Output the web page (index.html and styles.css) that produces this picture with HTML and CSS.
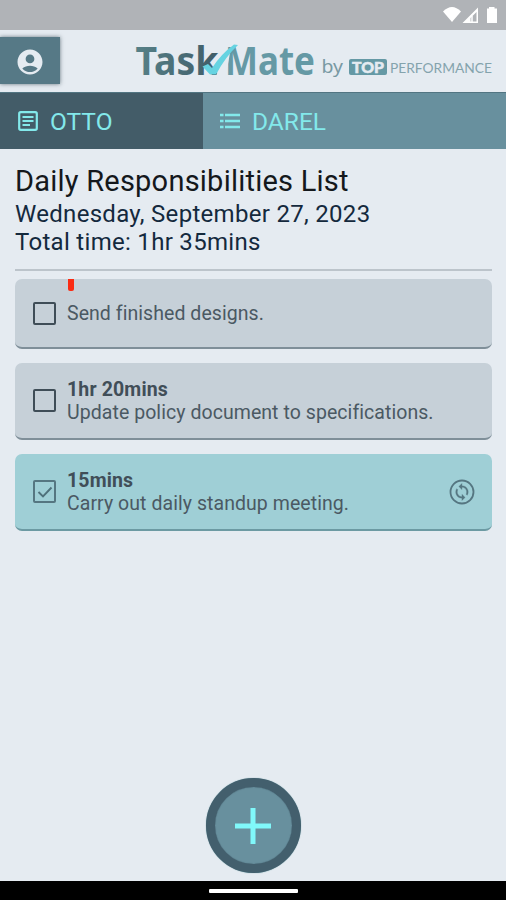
FILE: index.html
```html
<!DOCTYPE html>
<html lang="en">
<head>
<meta charset="utf-8">
<title>TaskMate</title>
<link rel="stylesheet" href="styles.css">
</head>
<body>
<div class="app">
  <div class="status">
    <svg width="60" height="20" viewBox="0 0 60 20" fill="#fff">
      <path d="M0 4.500 Q9 -4.500 18 4.500 L9 15Z"/>
      <path fill-rule="evenodd" d="M19.500 16 L35 0.500 V16Z M33.500 5 L27.500 11 V14.500 H33.500Z"/>
      <path d="M29 9 V15" stroke="#fff" stroke-width="1.500"/>
      <path d="M46 0 H51.500 V1.500 H54 V16 H44 V1.500 H46Z"/>
    </svg>
  </div>
  <header class="header">
    <button class="account" aria-label="Account">
      <svg width="30" height="30" viewBox="0 0 24 24"><path fill="#e5ebf1" d="M12 2C6.480 2 2 6.480 2 12s4.480 10 10 10 10-4.480 10-10S17.520 2 12 2zm0 4c1.930 0 3.500 1.570 3.500 3.500S13.930 13 12 13s-3.500-1.570-3.500-3.500S10.070 6 12 6zm0 14c-2.030 0-4.430-.820-6.140-2.880C7.550 15.800 9.680 15 12 15s4.450.800 6.140 2.120C16.430 19.180 14.030 20 12 20z"/></svg>
    </button>
    <svg class="logo" width="366" height="46" viewBox="130 38 366 46">
      <defs>
        <linearGradient id="dark" x1="0" y1="0" x2="1" y2="0"><stop offset="0" stop-color="#568087"/><stop offset="1" stop-color="#405c68"/></linearGradient>
      </defs>
      <text class="brand" x="135.500" y="74.500" textLength="83" lengthAdjust="spacingAndGlyphs" fill="url(#dark)">Task</text>
      <text class="brand" x="225" y="74.500" textLength="90" lengthAdjust="spacingAndGlyphs" fill="#6599a5">Mate</text>
      <path d="M216 75.500 L221 66 L231 47 L226 75.500Z" fill="#e5ebf1"/>
      <path d="M202.500 66.500 L208 64 L212 68 Q221 54 234 44.500 L238 45 Q226 56 216 74.500 H210Z" fill="#66d3e1"/>
      <text class="by" x="321.500" y="73" textLength="21.500" lengthAdjust="spacingAndGlyphs">by</text>
      <rect x="349" y="59" width="38" height="16" rx="2" fill="#6599a5"/>
      <text class="top" x="352" y="72.500" textLength="32" lengthAdjust="spacingAndGlyphs">TOP</text>
      <text class="perf" x="390" y="73" textLength="102" lengthAdjust="spacingAndGlyphs">PERFORMANCE</text>
    </svg>
  </header>
  <nav class="tabs">
    <a class="tab active">
      <svg width="20" height="20" viewBox="0 0 20 20" fill="none" stroke="#83e9eb"><rect x="1.200" y="1.200" width="17.600" height="17.600" rx="1.500" stroke-width="2.200"/><path stroke-width="2" d="M4.500 6H15.500M4.500 10H15.500M4.500 14H12"/></svg>
      <span>OTTO</span>
    </a>
    <a class="tab">
      <svg width="20" height="20" viewBox="0 0 20 20" stroke="#83e9eb" stroke-width="2.600"><path d="M0 4H3.500M5 4H20M0 10H3.500M5 10H20M0 16H3.500M5 16H20"/></svg>
      <span>DAREL</span>
    </a>
  </nav>
  <main class="main">
    <h1>Daily Responsibilities List</h1>
    <p class="sub">Wednesday, September 27, 2023</p>
    <p class="sub">Total time: 1hr 35mins</p>
    <div class="list">
      <div class="card first">
        <i class="marker"></i>
        <span class="box"></span>
        <div class="body"><p>Send finished designs.</p></div>
      </div>
      <div class="card">
        <span class="box"></span>
        <div class="body"><b>1hr 20mins</b><p>Update policy document to specifications.</p></div>
      </div>
      <div class="card done">
        <span class="box"><svg width="18" height="18" viewBox="0 0 18 18"><path d="M2.500 9 L7 13.500 L15.500 4.500" fill="none" stroke="#4f717b" stroke-width="1.900"/></svg></span>
        <div class="body"><b>15mins</b><p>Carry out daily standup meeting.</p></div>
        <svg class="repeat" width="26" height="26" viewBox="0 0 26 26"><circle cx="13" cy="13" r="11.500" fill="none" stroke="#557681" stroke-width="1.800"/><g transform="translate(3.600 3.600) scale(.78)"><path fill="#557681" stroke="#557681" stroke-width=".4" d="M12 4V1L8 5l4 4V6c3.310 0 6 2.690 6 6 0 1.010-.250 1.970-.700 2.800l1.460 1.460C19.540 15.030 20 13.570 20 12c0-4.420-3.580-8-8-8zm0 14c-3.310 0-6-2.690-6-6 0-1.010.250-1.970.700-2.800L5.240 7.740C4.460 8.970 4 10.430 4 12c0 4.420 3.580 8 8 8v3l4-4-4-4v3z"/></g></svg>
      </div>
    </div>
  </main>
  <div class="dock">
    <button class="fab" aria-label="Add task"><svg width="38" height="38" viewBox="0 0 38 38"><path d="M19 1V37M1 19H37" stroke="#80f8fa" stroke-width="5"/></svg></button>
  </div>
  <div class="navbar"><span></span></div>
</div>
</body>
</html>
```
FILE: styles.css
```css
* { box-sizing: border-box; }
body, h1, p { margin: 0; }
body { font-family: Roboto, sans-serif; background: #e5ebf1; }
button { border: 0; padding: 0; }
svg { display: block; flex: none; }
.app { width: 506px; height: 900px; display: flex; flex-direction: column; overflow: hidden; }
.status { height: 30px; background: #b0b3b7; display: flex; justify-content: flex-end; padding: 7px 3px 0 0; }
.header { height: 62px; display: flex; align-items: flex-start; justify-content: space-between; padding: 7px 10px 0 0; }
.account { width: 60px; height: 47px; background: #567986; display: flex; align-items: center; justify-content: center; box-shadow: 0 0 4px rgba(50, 70, 80, .7); }
.account svg { position: relative; top: 1px; }
.logo { margin-top: 1px; overflow: visible; }
.brand { font: 700 38.500px "Noto Sans", sans-serif; }
.by { font: 400 18px "Noto Sans", sans-serif; fill: #7899a3; }
.top { font: 900 15px Lato, sans-serif; fill: #e5ebf1; stroke: #e5ebf1; stroke-width: .5; }
.perf { font: 400 13.500px Lato, sans-serif; fill: #84a3ad; }
.tabs { height: 57px; display: flex; background: #68909e; border-top: 1px solid #527582; }
.tab { width: 202px; flex: none; display: flex; align-items: center; gap: 12px; padding-left: 17px; color: #83e9eb; font-size: 24.500px; }
.tab.active { width: 203px; padding-left: 18px; background: #435c68; }
.main { padding: 15px 14px 0 15px; flex: 1; }
h1 { font-size: 29px; line-height: 34px; font-weight: 400; letter-spacing: .23px; color: #14181c; white-space: nowrap; margin-bottom: 1px; }
.sub { font-size: 24px; line-height: 28px; letter-spacing: .3px; color: #14293d; white-space: nowrap; position: relative; top: 1px; }
.list { margin-top: 14px; border-top: 2px solid #bcc4cb; padding-top: 8px; display: flex; flex-direction: column; gap: 14px; }
.card { position: relative; height: 77px; border-radius: 7px; background: #c6d0d8; border-bottom: 2px solid #7f8f99; display: flex; align-items: center; padding: 0 17px 0 18px; color: #4b5963; }
.card.first { height: 70px; }
.card.done { background: #9fcfd6; border-bottom-color: #6c9aa3; }
.marker { position: absolute; left: 53px; top: 0; width: 6px; height: 12px; background: #fa2c14; border-radius: 0 0 2px 2px; }
.box { width: 23px; height: 23px; flex: none; border: 2px solid #3f4d57; border-radius: 2px; margin-right: 11px; display: flex; align-items: center; justify-content: center; }
.done .box { border-color: #557681; }
.body { flex: 1; font-size: 19.500px; line-height: 23px; letter-spacing: .06px; white-space: nowrap; }
.body b { display: block; color: #414e58; letter-spacing: .15px; }
.dock { height: 103px; display: flex; justify-content: center; }
.fab { width: 95px; height: 95px; border-radius: 50%; background: #68909e; border: 9px solid #435f6d; box-shadow: inset 0 0 1px #435f6d, 0 0 1px #5e939c; display: flex; align-items: center; justify-content: center; }
.navbar { height: 19px; background: #000; display: flex; align-items: center; justify-content: center; }
.navbar span { width: 89px; height: 4px; background: #fff; border-radius: 1px; }
```
